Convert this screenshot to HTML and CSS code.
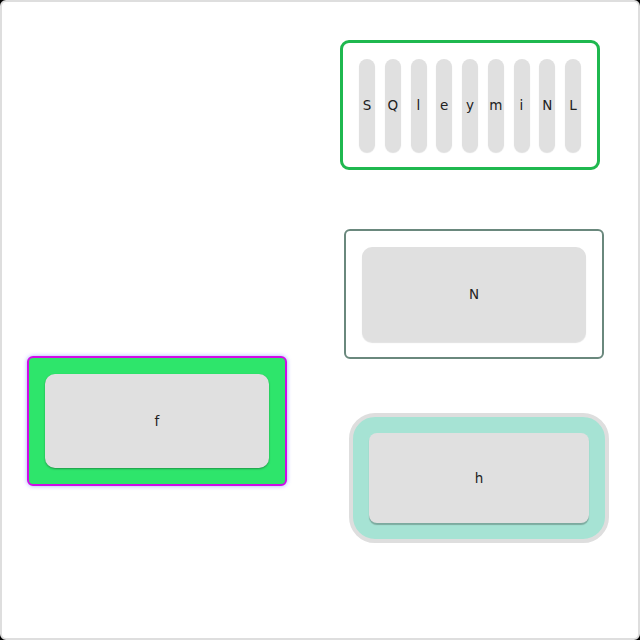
FILE: index.html
```html
<!DOCTYPE html>
<html>
<head>
<meta charset="utf-8">
<link rel="stylesheet" href="styles.css">
</head>
<body>
<div class="frame">
  <div class="col-left">
    <div class="card card-green">
      <button class="key key-dark">f</button>
    </div>
  </div>
  <div class="col-right">
    <div class="card card-pills">
      <button class="pill">S</button>
      <button class="pill">Q</button>
      <button class="pill">l</button>
      <button class="pill">e</button>
      <button class="pill">y</button>
      <button class="pill">m</button>
      <button class="pill">i</button>
      <button class="pill">N</button>
      <button class="pill">L</button>
    </div>
    <div class="card card-outline">
      <button class="key">N</button>
    </div>
    <div class="card card-mint">
      <button class="key key-mint">h</button>
    </div>
  </div>
</div>
</body>
</html>
```
FILE: styles.css
```css
html { background: #000; }
body { margin: 0; font-family: "DejaVu Sans", sans-serif; }
.frame {
  width: 640px; height: 640px; box-sizing: border-box;
  border: 2px solid #dedede; border-radius: 6px; background: #fff;
  display: flex; align-items: flex-start;
}
.col-left { margin-left: 25px; margin-top: 354px; }
.col-right { margin-left: 53px; margin-top: 38px; display: flex; flex-direction: column; align-items: flex-start; }
.card {
  width: 260px; height: 130px; box-sizing: border-box; padding: 16px;
  display: flex;
}
.key, .pill {
  border: none; margin: 0; padding: 0; background: #e0e0e0; color: #222;
  font-family: "DejaVu Sans", sans-serif; font-size: 13.5px;
  display: flex; align-items: center; justify-content: center;
}
.card-pills { border: 3px solid #1fb84f; border-radius: 9px; justify-content: space-between; }
.pill { width: 16px; height: 92px; border-radius: 8px; box-shadow: 0 2px 1px rgba(0,0,0,0.13); }
.card-outline { border: 2px solid #6a887d; border-radius: 6px; margin-top: 59px; margin-left: 4px; }
.key { flex: 1; border-radius: 10px; box-shadow: 0 2px 1px rgba(0,0,0,0.12); height: 94px; }
.card-mint { border: 4px solid #dedede; border-radius: 26px; background: #a6e3d4; margin-top: 54px; margin-left: 9px; }
.key-mint { height: 90px; border-radius: 8px; box-shadow: 0 2px 1px rgba(0,0,0,0.25); }
.card-green { border: 2px solid #d10be8; border-radius: 6px; background: #2ee56b; box-shadow: 0 0 4px rgba(110,110,255,0.6); }
.key-dark { box-shadow: 0 1px 2px rgba(0,0,0,0.35); }
```
